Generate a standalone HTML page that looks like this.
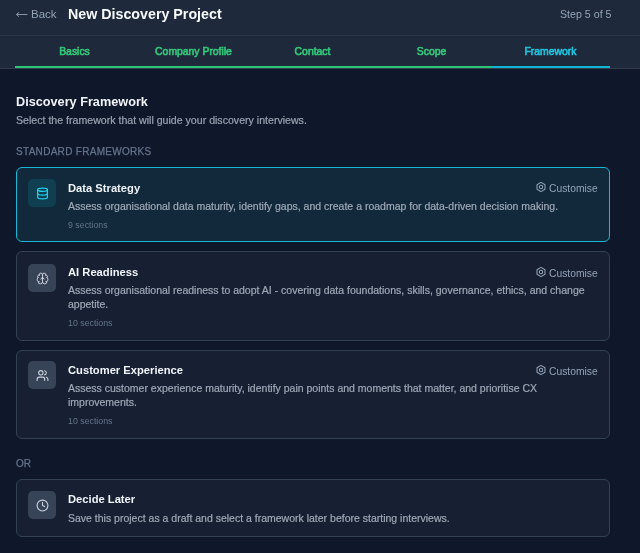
<!DOCTYPE html>
<html><head><meta charset="utf-8">
<style>
*{margin:0;padding:0;box-sizing:border-box}
html,body{width:640px;height:553px;overflow:hidden;background:#0f172a;font-family:"Liberation Sans",sans-serif;position:relative}
.abs{position:absolute;white-space:nowrap;will-change:transform}
#hdr{position:absolute;left:0;top:0;width:640px;height:68px;background:#1e293b}
#hline{position:absolute;left:0;top:35px;width:640px;height:1px;background:#2c3644}
#tline{position:absolute;left:0;top:68px;width:640px;height:1px;background:#333c4b}
.back{left:31px;top:6px;font-size:11.5px;color:#94a3b8;line-height:16px}
.arrow{position:absolute;left:15px;top:11px;width:13px;height:7px}
.title{left:68px;top:5px;font-size:14.25px;font-weight:bold;color:#f9fafb;line-height:18px}
.step{left:560px;top:7px;font-size:10.65px;color:#94a3b8;line-height:14px}
.tab{top:46px;font-size:10.4px;font-weight:normal;-webkit-text-stroke:0.6px currentColor;color:#34c97a;line-height:12px;width:119px;text-align:center}
.ul{position:absolute;top:66px;height:2px}
.h2{left:16px;top:94px;font-size:12.7px;font-weight:bold;color:#f1f5f9;line-height:16px}
.sub{left:16px;top:114px;font-size:10.6px;color:#9aa3b2;-webkit-text-stroke:0.2px currentColor;line-height:13px}
.cap{left:16px;top:146px;font-size:10px;color:#64748b;-webkit-text-stroke:0.25px currentColor;letter-spacing:0.3px;line-height:12px}
.card{position:absolute;left:16px;width:594px;border:1px solid #334155;border-radius:6px;background:#172033}
.card.sel{border-color:#18b8d6;background:#11293b}
.ib{position:absolute;left:28px;width:28px;height:28px;border-radius:5px;background:#374357}
.ib.isel{background:#0f3f51}
.ib svg{position:absolute;left:7.5px;top:8px;width:13px;height:13px}
.ct{left:68px;font-size:11.2px;font-weight:bold;color:#f1f5f9;line-height:14px}
.cd{left:68px;font-size:10.5px;color:#a0a8b6;-webkit-text-stroke:0.2px currentColor;line-height:14px}
.cs{left:68px;font-size:8.8px;color:#64748b;line-height:11px}
.cust{left:535px;font-size:10.3px;color:#94a3b8;line-height:14px}
.cust svg{width:12px;height:12px;vertical-align:-1.3px;margin-right:2.5px;margin-left:-0.5px}
.or{left:16px;top:458px;font-size:10px;color:#64748b;-webkit-text-stroke:0.25px currentColor;line-height:12px}
</style></head><body>
<div id="hdr"></div><div id="hline"></div><div id="tline"></div>
<svg class="arrow" viewBox="0 0 13 7" fill="none" stroke="#8b95a5" stroke-width="1" stroke-linecap="round" stroke-linejoin="round"><path d="M1.5 3.5H12M1.5 3.5L3.8 1.5M1.5 3.5L3.8 5.5"/></svg>
<div class="abs back">Back</div>
<div class="abs title">New Discovery Project</div>
<div class="abs step">Step 5 of 5</div>
<div class="abs tab" style="left:15px">Basics</div>
<div class="abs tab" style="left:134px">Company Profile</div>
<div class="abs tab" style="left:253px">Contact</div>
<div class="abs tab" style="left:372px">Scope</div>
<div class="abs tab" style="left:491px;color:#22c5e0">Framework</div>
<div class="ul" style="left:15px;width:476px;background:#2cc676"></div>
<div class="ul" style="left:491px;width:119px;background:#0fb5d4"></div>
<div class="abs h2">Discovery Framework</div>
<div class="abs sub">Select the framework that will guide your discovery interviews.</div>
<div class="abs cap">STANDARD FRAMEWORKS</div>
<div class="card sel" style="top:167px;height:75px"></div>
<div class="ib isel" style="top:179px"><svg viewBox="0 0 24 24" fill="none" stroke="#22d3ee" stroke-width="2.2" stroke-linecap="round" stroke-linejoin="round"><ellipse cx="12" cy="5" rx="9" ry="3"/><path d="M3 5v14a9 3 0 0 0 18 0V5"/><path d="M3 12a9 3 0 0 0 18 0"/></svg></div>
<div class="abs ct" style="top:181px">Data Strategy</div>
<div class="abs cust" style="top:181px"><svg viewBox="0 0 12 12" fill="none" stroke="#94a3b8" stroke-width="1.05" stroke-linejoin="round"><path d="M6.00,1.40 L9.98,3.70 L9.98,8.30 L6.00,10.60 L2.02,8.30 L2.02,3.70Z"/><circle cx="6" cy="6" r="1.7"/></svg>Customise</div>
<div class="abs cd" style="top:199px">Assess organisational data maturity, identify gaps, and create a roadmap for data-driven decision making.</div>
<div class="abs cs" style="top:220px">9 sections</div>
<div class="card" style="top:251px;height:90px"></div>
<div class="ib" style="top:264px"><svg viewBox="0 0 24 24" fill="none" stroke="#cbd2dc" stroke-width="1.75" stroke-linecap="round" stroke-linejoin="round"><path d="M12 5a3 3 0 1 0-5.997.125 4 4 0 0 0-2.526 5.77 4 4 0 0 0 .556 6.588A4 4 0 1 0 12 18Z"/><path d="M12 5a3 3 0 1 1 5.997.125 4 4 0 0 1 2.526 5.77 4 4 0 0 1-.556 6.588A4 4 0 1 1 12 18Z"/><path d="M15 13a4.5 4.5 0 0 1-3-4 4.5 4.5 0 0 1-3 4"/><path d="M17.599 6.5a3 3 0 0 0 .399-1.375"/><path d="M6.003 5.125A3 3 0 0 0 6.401 6.5"/><path d="M3.477 10.896a4 4 0 0 1 .585-.396"/><path d="M19.938 10.5a4 4 0 0 1 .585.396"/><path d="M6 18a4 4 0 0 1-1.967-.516"/><path d="M19.967 17.484A4 4 0 0 1 18 18"/></svg></div>
<div class="abs ct" style="top:265px">AI Readiness</div>
<div class="abs cust" style="top:266px"><svg viewBox="0 0 12 12" fill="none" stroke="#94a3b8" stroke-width="1.05" stroke-linejoin="round"><path d="M6.00,1.40 L9.98,3.70 L9.98,8.30 L6.00,10.60 L2.02,8.30 L2.02,3.70Z"/><circle cx="6" cy="6" r="1.7"/></svg>Customise</div>
<div class="abs cd" style="top:283px">Assess organisational readiness to adopt AI - covering data foundations, skills, governance, ethics, and change<br>appetite.</div>
<div class="abs cs" style="top:318px">10 sections</div>
<div class="card" style="top:350px;height:89px"></div>
<div class="ib" style="top:361px"><svg viewBox="0 0 24 24" fill="none" stroke="#cbd2dc" stroke-width="2" stroke-linecap="round" stroke-linejoin="round"><path d="M16 21v-2a4 4 0 0 0-4-4H6a4 4 0 0 0-4 4v2"/><circle cx="9" cy="7" r="4"/><path d="M22 21v-2a4 4 0 0 0-3-3.87"/><path d="M16 3.13a4 4 0 0 1 0 7.75"/></svg></div>
<div class="abs ct" style="top:363px">Customer Experience</div>
<div class="abs cust" style="top:364px"><svg viewBox="0 0 12 12" fill="none" stroke="#94a3b8" stroke-width="1.05" stroke-linejoin="round"><path d="M6.00,1.40 L9.98,3.70 L9.98,8.30 L6.00,10.60 L2.02,8.30 L2.02,3.70Z"/><circle cx="6" cy="6" r="1.7"/></svg>Customise</div>
<div class="abs cd" style="top:381px">Assess customer experience maturity, identify pain points and moments that matter, and prioritise CX<br>improvements.</div>
<div class="abs cs" style="top:416px">10 sections</div>
<div class="abs or">OR</div>
<div class="card" style="top:479px;height:58px"></div>
<div class="ib" style="top:491px"><svg viewBox="0 0 24 24" fill="none" stroke="#cbd2dc" stroke-width="2" stroke-linecap="round" stroke-linejoin="round"><circle cx="12" cy="12" r="10"/><polyline points="12 6 12 12 16 14"/></svg></div>
<div class="abs ct" style="top:492px">Decide Later</div>
<div class="abs cd" style="top:511px">Save this project as a draft and select a framework later before starting interviews.</div>
</body></html>
